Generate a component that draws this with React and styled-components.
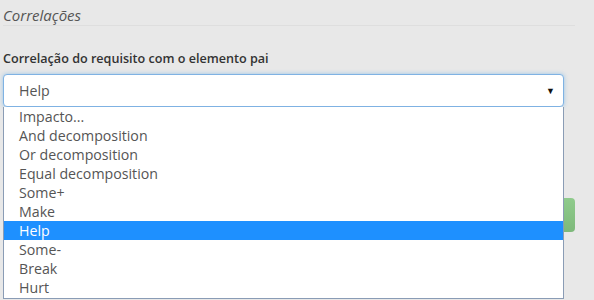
import React from "react";
import styled, { createGlobalStyle } from "styled-components";

const Global = createGlobalStyle`
  html, body { margin: 0; padding: 0; background: #e8e8e8; }
  body { font-family: "Open Sans", "Noto Sans", sans-serif; overflow: hidden; }
`;

const Page = styled.div`
  width: 594px;
  height: 300px;
  padding: 0 0 0 3px;
  box-sizing: border-box;
`;

const Legend = styled.div`
  font-style: italic;
  font-size: 15px;
  color: #555;
  height: 26px;
  line-height: 30px;
  border-bottom: 1px solid #dedede;
  width: 572px;
  box-sizing: border-box;
`;

const Label = styled.div`
  margin-top: 24px;
  font-size: 12.6px;
  font-weight: 600;
  color: #333;
  line-height: 17px;
`;

const SelectWrap = styled.div`
  position: relative;
  margin-top: 7px;
  width: 561px;
`;

const SelectBox = styled.div`
  height: 33px;
  box-sizing: border-box;
  border: 1px solid #7fb2e3;
  border-radius: 4px;
  background: #fff;
  box-shadow: 0 0 4px rgba(102, 175, 233, 0.6);
  display: flex;
  align-items: center;
  justify-content: space-between;
  padding: 0 8px 0 15px;
  font-size: 14.2px;
  color: #555;
`;

const Arrow = styled.span`
  font-size: 9px;
  color: #111;
`;

const List = styled.ul`
  position: absolute;
  left: 0;
  top: 33px;
  width: 561px;
  box-sizing: border-box;
  margin: 0;
  padding: 0 0 1px 0;
  list-style: none;
  background: #fff;
  border: 1px solid #8a9cb5;
  border-top: none;
  z-index: 2;
`;

const Item = styled.li`
  height: 19px;
  line-height: 19px;
  padding-left: 15px;
  font-size: 14.2px;
  color: ${(p) => (p.$active ? "#fff" : "#555")};
  background: ${(p) => (p.$active ? "#1e90ff" : "transparent")};
`;

const Footer = styled.div`
  width: 572px;
  display: flex;
  justify-content: flex-end;
  margin-top: 91px;
`;

const Button = styled.button`
  width: 80px;
  height: 34px;
  border: none;
  border-radius: 4px;
  background: linear-gradient(#8fcb8c, #7eb97b);
  color: #fff;
`;

const options = [
  "Impacto...",
  "And decomposition",
  "Or decomposition",
  "Equal decomposition",
  "Some+",
  "Make",
  "Help",
  "Some-",
  "Break",
  "Hurt",
];

export default function App() {
  return (
    <Page>
      <Global />
      <Legend>Correlações</Legend>
      <Label>Correlação do requisito com o elemento pai</Label>
      <SelectWrap>
        <SelectBox>
          <span>Help</span>
          <Arrow>▼</Arrow>
        </SelectBox>
        <List>
          {options.map((o) => (
            <Item key={o} $active={o === "Help"}>
              {o}
            </Item>
          ))}
        </List>
      </SelectWrap>
      <Footer>
        <Button>Salvar</Button>
      </Footer>
    </Page>
  );
}
